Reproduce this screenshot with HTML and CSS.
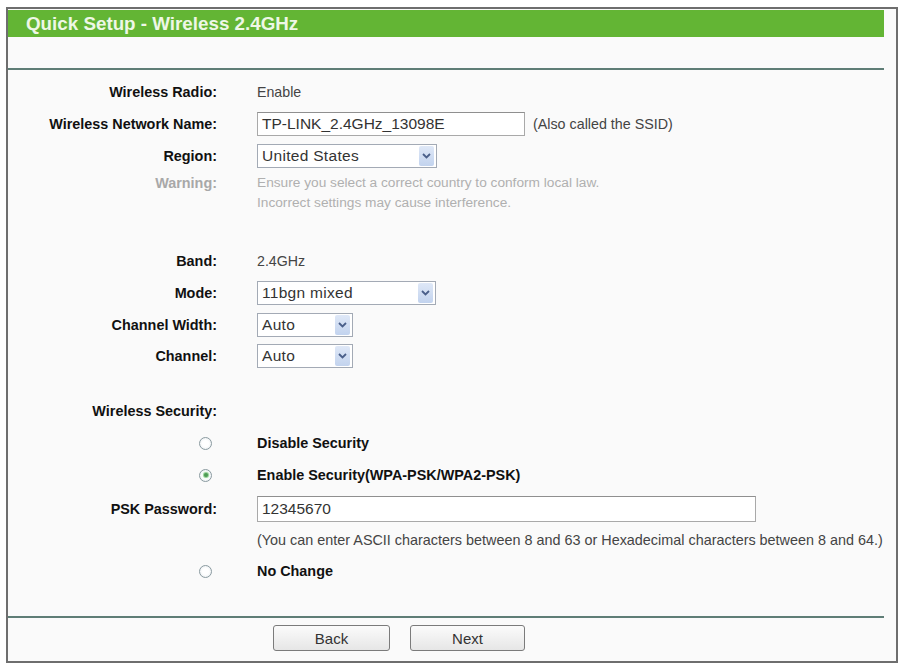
FILE: index.html
```html
<!DOCTYPE html>
<html>
<head>
<meta charset="utf-8">
<link rel="stylesheet" href="styles.css">
</head>
<body>
<div class="frame">
  <div class="header"><span class="title">Quick Setup - Wireless 2.4GHz</span></div>
  <div class="sub"></div>
  <div class="rule"></div>
  <div class="form">
    <div class="row first">
      <div class="lbl">Wireless Radio:</div>
      <div class="val muted">Enable</div>
    </div>
    <div class="row">
      <div class="lbl">Wireless Network Name:</div>
      <div class="val"><span class="input ssid">TP-LINK_2.4GHz_13098E</span><span class="note">(Also called the SSID)</span></div>
    </div>
    <div class="row">
      <div class="lbl">Region:</div>
      <div class="val"><span class="select w-region"><span class="sel-text">United States</span><span class="arrow"><svg width="9" height="6" viewBox="0 0 9 6"><path d="M1 1 L4.5 4.5 L8 1" fill="none" stroke="#4a5f8a" stroke-width="1.8"/></svg></span></span></div>
    </div>
    <div class="row warn">
      <div class="lbl grey">Warning:</div>
      <div class="val grey">Ensure you select a correct country to conform local law.<br>Incorrect settings may cause interference.</div>
    </div>
    <div class="row band">
      <div class="lbl">Band:</div>
      <div class="val muted">2.4GHz</div>
    </div>
    <div class="row">
      <div class="lbl">Mode:</div>
      <div class="val"><span class="select w-mode"><span class="sel-text">11bgn mixed</span><span class="arrow"><svg width="9" height="6" viewBox="0 0 9 6"><path d="M1 1 L4.5 4.5 L8 1" fill="none" stroke="#4a5f8a" stroke-width="1.8"/></svg></span></span></div>
    </div>
    <div class="row">
      <div class="lbl">Channel Width:</div>
      <div class="val"><span class="select w-small"><span class="sel-text">Auto</span><span class="arrow"><svg width="9" height="6" viewBox="0 0 9 6"><path d="M1 1 L4.5 4.5 L8 1" fill="none" stroke="#4a5f8a" stroke-width="1.8"/></svg></span></span></div>
    </div>
    <div class="row short">
      <div class="lbl">Channel:</div>
      <div class="val"><span class="select w-small"><span class="sel-text">Auto</span><span class="arrow"><svg width="9" height="6" viewBox="0 0 9 6"><path d="M1 1 L4.5 4.5 L8 1" fill="none" stroke="#4a5f8a" stroke-width="1.8"/></svg></span></span></div>
    </div>
    <div class="row sec">
      <div class="lbl">Wireless Security:</div>
      <div class="val"></div>
    </div>
    <div class="row">
      <div class="lbl"><span class="radio"></span></div>
      <div class="val bold">Disable Security</div>
    </div>
    <div class="row">
      <div class="lbl"><span class="radio on"></span></div>
      <div class="val bold">Enable Security(WPA-PSK/WPA2-PSK)</div>
    </div>
    <div class="row psk-row">
      <div class="lbl">PSK Password:</div>
      <div class="val"><span class="input psk">12345670</span></div>
    </div>
    <div class="row hint">
      <div class="lbl"></div>
      <div class="val">(You can enter ASCII characters between 8 and 63 or Hexadecimal characters between 8 and 64.)</div>
    </div>
    <div class="row">
      <div class="lbl"><span class="radio"></span></div>
      <div class="val bold">No Change</div>
    </div>
  </div>
  <div class="rule bottom"></div>
  <div class="buttons">
    <span class="btn">Back</span>
    <span class="btn">Next</span>
  </div>
</div>
</body>
</html>
```
FILE: styles.css
```css
html, body {
  margin: 0;
  padding: 0;
  background: #ffffff;
}
body {
  font-family: "Liberation Sans", Arial, sans-serif;
  color: #222;
}
.frame {
  margin: 7px 0 0 6px;
  width: 892px;
  height: 656px;
  border: 2px solid #6e6e6e;
  background: #fafafa;
  box-sizing: border-box;
}
.header {
  margin: 1px 12px 0 0;
  height: 27px;
  background: #63b534;
  display: flex;
  align-items: center;
  padding-left: 18px;
}
.title {
  color: #eef7e6;
  font-size: 18.8px;
  font-weight: bold;
}
.sub {
  height: 31px;
}
.rule {
  height: 2px;
  margin-right: 12px;
  background: #5e7d76;
}
.form {
  padding-top: 6px;
}
.row {
  display: grid;
  grid-template-columns: 209px 1fr;
  column-gap: 40px;
  align-items: center;
  height: 32px;
}
.row.short {
  height: 30px;
}
.lbl {
  font-weight: bold;
  font-size: 14.4px;
  color: #111;
  display: flex;
  justify-content: flex-end;
  align-items: center;
  white-space: nowrap;
}
.lbl.grey {
  color: #a8a8a8;
}
.val {
  font-size: 14.2px;
  color: #333;
  display: flex;
  align-items: center;
  white-space: nowrap;
}
.val.muted {
  color: #444;
}
.val.grey {
  color: #b0b0b0;
  display: block;
  line-height: 20px;
  font-size: 13.7px;
}
.val.bold {
  font-weight: bold;
  color: #111;
  font-size: 14.4px;
}
.row.warn {
  height: auto;
  align-items: start;
  padding-top: 1px;
}
.row.warn .lbl {
  height: 20px;
}
.row.band {
  margin-top: 32px;
}
.row.sec {
  margin-top: 24px;
}
.row.psk-row {
  margin-top: 2px;
}
.row.hint {
  height: 30px;
}
.row.hint .val {
  font-size: 14.4px;
  color: #444;
}
.input {
  box-sizing: border-box;
  display: inline-flex;
  align-items: center;
  height: 24px;
  border: 1px solid #a9a9a9;
  border-top-color: #8f8f8f;
  background: #fff;
  padding-left: 4px;
  font-size: 15.5px;
  color: #333;
}
.input.ssid {
  width: 268px;
}
.input.psk {
  width: 499px;
  height: 26px;
}
.note {
  margin-left: 8px;
  font-size: 14.3px;
  color: #444;
}
.select {
  box-sizing: border-box;
  display: inline-flex;
  align-items: center;
  justify-content: space-between;
  height: 24px;
  border: 1px solid #a3aab5;
  background: #fff;
  padding: 0 2px 0 4px;
  font-size: 15.5px;
  letter-spacing: 0.3px;
  color: #333;
}
.w-region { width: 180px; }
.w-mode { width: 179px; }
.w-small { width: 96px; }
.arrow {
  width: 15px;
  height: 20px;
  background: linear-gradient(#dfe8f7, #c2d3ee);
  border-radius: 2px;
  display: flex;
  align-items: center;
  justify-content: center;
}
.radio {
  box-sizing: border-box;
  width: 13px;
  height: 13px;
  border-radius: 50%;
  border: 1px solid #8a9aa0;
  background: radial-gradient(circle, #ffffff 40%, #e3e9ec 100%);
  margin-right: 5px;
  display: flex;
  align-items: center;
  justify-content: center;
}
.radio.on::after {
  content: "";
  width: 4px;
  height: 4px;
  border-radius: 50%;
  background: #4f9a55;
  box-shadow: 0 0 1px 1px #8ccf8e;
}
.rule.bottom {
  margin-top: 29px;
}
.buttons {
  display: flex;
  gap: 20px;
  padding-left: 265px;
  padding-top: 7px;
}
.btn {
  box-sizing: border-box;
  width: 117px;
  height: 26px;
  border: 1px solid #7b7b7b;
  border-radius: 3px;
  background: linear-gradient(#fbfbfb, #e6e6e6);
  display: flex;
  align-items: center;
  justify-content: center;
  font-size: 15px;
  color: #333;
}
.btn + .btn {
  width: 115px;
}
```
